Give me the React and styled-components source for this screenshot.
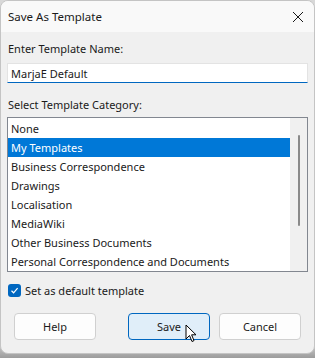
import React from "react";
import styled, { createGlobalStyle } from "styled-components";

const GlobalStyle = createGlobalStyle`
  html, body {
    margin: 0;
    padding: 0;
    background: #a6a6a6;
    font-family: "Noto Sans", "Open Sans", sans-serif;
  }
`;

const Page = styled.div`
  width: 315px;
  height: 358px;
  background: linear-gradient(#d8d8d8, #d8d8d8 340px, #9c9c9c 358px);
`;

const Window = styled.div`
  width: 313px;
  height: 352px;
  background: #f0f0f0;
  border: 1px solid #c4c4c4;
  border-radius: 8px;
  overflow: hidden;
  display: flex;
  flex-direction: column;
  font-size: 11px;
  color: #1a1a1a;
`;

const TitleBar = styled.div`
  height: 31px;
  background: #f9f9f9;
  display: flex;
  align-items: center;
  justify-content: space-between;
  padding: 0 8px 0 7px;
  flex-shrink: 0;
`;

const Title = styled.span`
  font-size: 11.5px;
  color: #1a1a1a;
`;

const Close = styled.svg`
  width: 12px;
  height: 12px;
  margin-right: 2px;
`;

const Body = styled.div`
  padding: 8px 6px 0 6px;
  display: flex;
  flex-direction: column;
`;

const Label = styled.div`
  height: 18px;
  line-height: 18px;
  padding-left: 1px;
  margin-top: ${(p) => p.$top || 0}px;
`;

const Input = styled.div`
  margin-top: 5px;
  height: 20px;
  line-height: 19px;
  background: #fff;
  border: 1px solid #e3e3e3;
  border-bottom: 1px solid #0067c0;
  padding-left: 3px;
  box-sizing: border-box;
`;

const ListBox = styled.div`
  margin-top: 3px;
  height: 155px;
  border: 1px solid #828790;
  background: #fff;
  display: flex;
  box-sizing: border-box;
`;

const Items = styled.div`
  flex: 1;
  display: flex;
  flex-direction: column;
  padding-top: 1px;
`;

const Item = styled.div`
  height: 19px;
  line-height: 19px;
  padding-left: 3px;
  white-space: nowrap;
  background: ${(p) => (p.$selected ? "#0078d7" : "transparent")};
  color: ${(p) => (p.$selected ? "#fff" : "#1a1a1a")};
`;

const ScrollTrack = styled.div`
  width: 17px;
  background: #f0f0f0;
  display: flex;
  justify-content: center;
  padding-top: 17px;
  box-sizing: border-box;
`;

const Thumb = styled.div`
  width: 2px;
  height: 91px;
  border-radius: 1px;
  background: #8a8a8a;
`;

const CheckRow = styled.label`
  margin-top: 11px;
  display: flex;
  align-items: center;
  gap: 4px;
  padding-left: 1px;
`;

const Box = styled.span`
  width: 13px;
  height: 13px;
  border-radius: 3px;
  background: #0067c0;
  display: flex;
  align-items: center;
  justify-content: center;
`;

const Buttons = styled.div`
  margin-top: 15px;
  display: flex;
  padding-left: 7px;
`;

const Button = styled.div`
  width: 82px;
  height: 27px;
  box-sizing: border-box;
  border-radius: 4px;
  border: 1px solid ${(p) => (p.$primary ? "#0067c0" : "#d0d0d0")};
  background: ${(p) => (p.$primary ? "#e0eef9" : "#fdfdfd")};
  display: flex;
  align-items: center;
  justify-content: center;
  margin-left: ${(p) => p.$gap || 0}px;
  position: relative;
`;

const Cursor = styled.svg`
  position: absolute;
  left: 56px;
  top: 10px;
  width: 12px;
  height: 19px;
`;

const categories = [
  "None",
  "My Templates",
  "Business Correspondence",
  "Drawings",
  "Localisation",
  "MediaWiki",
  "Other Business Documents",
  "Personal Correspondence and Documents",
];

export default function App() {
  return (
    <Page>
      <GlobalStyle />
      <Window>
        <TitleBar>
          <Title>Save As Template</Title>
          <Close viewBox="0 0 12 12">
            <path d="M1 1 L11 11 M11 1 L1 11" stroke="#1a1a1a" strokeWidth="1" />
          </Close>
        </TitleBar>
        <Body>
          <Label>Enter Template Name:</Label>
          <Input>MarjaE Default</Input>
          <Label $top={13}>Select Template Category:</Label>
          <ListBox>
            <Items>
              {categories.map((c) => (
                <Item key={c} $selected={c === "My Templates"}>
                  {c}
                </Item>
              ))}
            </Items>
            <ScrollTrack>
              <Thumb />
            </ScrollTrack>
          </ListBox>
          <CheckRow>
            <Box>
              <svg width="9" height="9" viewBox="0 0 9 9">
                <path d="M1.5 4.8 L3.6 6.8 L7.6 2.2" fill="none" stroke="#fff" strokeWidth="1.2" />
              </svg>
            </Box>
            Set as default template
          </CheckRow>
          <Buttons>
            <Button>Help</Button>
            <Button $primary $gap={32}>
              Save
              <Cursor viewBox="0 0 12 19">
                <path
                  d="M1 1 L1 15 L4.5 11.5 L7 17.5 L9 16.6 L6.6 10.8 L11 10.8 Z"
                  fill="#fff"
                  stroke="#000"
                  strokeWidth="1"
                  strokeLinejoin="round"
                />
              </Cursor>
            </Button>
            <Button $gap={9}>Cancel</Button>
          </Buttons>
        </Body>
      </Window>
    </Page>
  );
}
